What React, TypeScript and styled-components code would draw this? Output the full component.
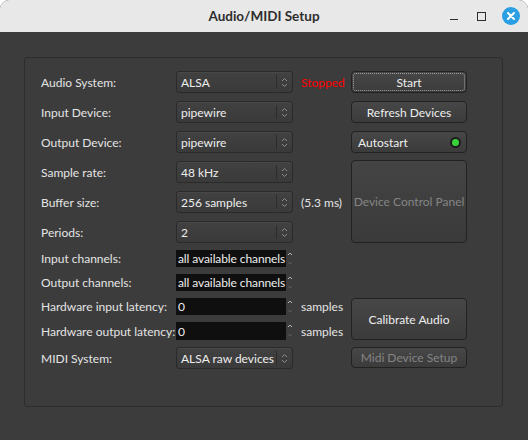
import React from 'react';
import styled, { createGlobalStyle } from 'styled-components';

const GlobalStyle = createGlobalStyle`
  html, body {
    margin: 0;
    padding: 0;
    background: #ffffff;
  }
  body {
    font-family: Lato, 'Noto Sans', sans-serif;
    font-size: 12px;
  }
`;

const ComboArrows = () => (
  <svg width="7" height="11" viewBox="0 0 7 11">
    <path d="M1 4 L3.5 1.5 L6 4" fill="none" stroke="#8c8c8c" strokeWidth="1" />
    <path d="M1 7 L3.5 9.5 L6 7" fill="none" stroke="#8c8c8c" strokeWidth="1" />
  </svg>
);

const SpinArrows = () => (
  <svg width="6" height="16" viewBox="0 0 6 16">
    <path d="M1 4 L3 2 L5 4" fill="none" stroke="#b8b8b8" strokeWidth="1" />
    <path d="M1 11 L3 13 L5 11" fill="none" stroke="#5a5a5a" strokeWidth="1" />
  </svg>
);

const Combo = ({ row, value }: { row: number; value: string }) => (
  <Field $row={row}>
    <ComboBox>
      <ComboText>{value}</ComboText>
      <ComboButton>
        <ComboArrows />
      </ComboButton>
    </ComboBox>
  </Field>
);

const Spin = ({ row, value }: { row: number; value: string }) => (
  <Field $row={row}>
    <SpinField>{value}</SpinField>
    <SpinButtons>
      <SpinArrows />
    </SpinButtons>
  </Field>
);

const settings = [
  { label: 'Audio System:', kind: 'combo', value: 'ALSA' },
  { label: 'Input Device:', kind: 'combo', value: 'pipewire' },
  { label: 'Output Device:', kind: 'combo', value: 'pipewire' },
  { label: 'Sample rate:', kind: 'combo', value: '48 kHz' },
  { label: 'Buffer size:', kind: 'combo', value: '256 samples' },
  { label: 'Periods:', kind: 'combo', value: '2' },
  { label: 'Input channels:', kind: 'spin', value: 'all available channels' },
  { label: 'Output channels:', kind: 'spin', value: 'all available channels' },
  { label: 'Hardware input latency:', kind: 'spin', value: '0' },
  { label: 'Hardware output latency:', kind: 'spin', value: '0' },
  { label: 'MIDI System:', kind: 'combo', value: 'ALSA raw devices' },
];

export default function App() {
  return (
    <>
      <GlobalStyle />
      <Window>
        <TitleBar>
          <Title>Audio/MIDI Setup</Title>
          <WindowControls>
            <Minimize />
            <Maximize />
            <CloseButton>
              <svg width="8" height="8" viewBox="0 0 8 8">
                <path d="M1 1 L7 7 M7 1 L1 7" stroke="#fff" strokeWidth="2" strokeLinecap="round" />
              </svg>
            </CloseButton>
          </WindowControls>
        </TitleBar>

        <Body>
          <Frame>
            <Grid>
              {settings.map((s, i) => (
                <React.Fragment key={s.label}>
                  <Label $row={i + 1}>{s.label}</Label>
                  {s.kind === 'combo' ? (
                    <Combo row={i + 1} value={s.value} />
                  ) : (
                    <Spin row={i + 1} value={s.value} />
                  )}
                </React.Fragment>
              ))}

              <Extra $row={1} $alert>Stopped</Extra>
              <Extra $row={5}>(5.3 ms)</Extra>
              <Extra $row={9}>samples</Extra>
              <Extra $row={10}>samples</Extra>

              <Button $row={1} $focused>Start</Button>
              <Button $row={2}>Refresh Devices</Button>
              <ToggleButton $row={3}>
                Autostart
                <Led />
              </ToggleButton>
              <PanelButton $row={4} $span={3} $disabled>Device Control Panel</PanelButton>
              <Button $row={9} $span={2}>Calibrate Audio</Button>
              <Button $row={11} $disabled>Midi Device Setup</Button>
            </Grid>
          </Frame>
        </Body>
      </Window>
    </>
  );
}

const Window = styled.div`
  width: 528px;
  height: 440px;
  display: flex;
  flex-direction: column;
  border-radius: 9px 9px 0 0;
  overflow: hidden;
  background: #3c3c3c;
`;

const TitleBar = styled.div`
  position: relative;
  height: 32px;
  flex: none;
  background: #e8e8e8;
  display: flex;
  align-items: center;
  justify-content: center;
`;

const Title = styled.div`
  font-family: Lato, 'Noto Sans', sans-serif;
  font-weight: 700;
  font-size: 13.5px;
  color: #2e2e2e;
`;

const WindowControls = styled.div`
  position: absolute;
  right: 8px;
  top: 7px;
  display: flex;
  align-items: center;
`;

const Minimize = styled.div`
  width: 8px;
  height: 1px;
  background: #2e2e2e;
  margin: 6px 19px 0 0;
`;

const Maximize = styled.div`
  width: 7px;
  height: 7px;
  border: 1px solid #2e2e2e;
  margin-right: 16px;
`;

const CloseButton = styled.div`
  width: 18px;
  height: 18px;
  border-radius: 50%;
  background: #2b9fe3;
  display: flex;
  align-items: center;
  justify-content: center;
`;

const Body = styled.div`
  flex: 1;
  padding: 25px 25px 33px 24px;
`;

const Frame = styled.div`
  height: 350px;
  box-sizing: border-box;
  border: 1px solid #2c2c2c;
  border-radius: 3px;
  padding: 13px 0 0 16px;
`;

const Grid = styled.div`
  display: grid;
  grid-template-columns: 135px 117px 8px 50px 116px;
  grid-template-rows: 23px 23px 23px 23px 23px 22px 17px 17px 17px 18px 22px;
  row-gap: 7px;
  color: #e6e6e6;
`;

type Cell = { $row: number; $span?: number };

const Label = styled.div<Cell>`
  grid-column: 1;
  grid-row: ${(p) => p.$row};
  display: flex;
  align-items: center;
  white-space: nowrap;
  color: #e4e4e4;
`;

const Field = styled.div<Cell>`
  grid-column: 2;
  grid-row: ${(p) => p.$row};
  display: flex;
  align-items: stretch;
  min-width: 0;
`;

const Extra = styled.div<Cell & { $alert?: boolean }>`
  grid-column: 4;
  grid-row: ${(p) => p.$row};
  display: flex;
  align-items: center;
  white-space: nowrap;
  color: ${(p) => (p.$alert ? '#ff0000' : '#e4e4e4')};
`;

const ComboBox = styled.div`
  flex: 1;
  height: 22px;
  box-sizing: border-box;
  display: flex;
  align-items: center;
  border: 1px solid #2a2a2a;
  border-radius: 3px;
  background: linear-gradient(#414141, #3a3a3a);
  box-shadow: inset 0 1px 0 rgba(255, 255, 255, 0.04);
`;

const ComboText = styled.div`
  flex: 1;
  padding-left: 4px;
  white-space: nowrap;
  color: #eeeeee;
`;

const ComboButton = styled.div`
  width: 15px;
  align-self: stretch;
  margin: 3px 0;
  border-left: 1px solid #2c2c2c;
  display: flex;
  align-items: center;
  justify-content: center;
`;

const SpinField = styled.div`
  width: 110px;
  flex: none;
  box-sizing: border-box;
  background: #0f0f0f;
  padding-left: 2px;
  display: flex;
  align-items: center;
  white-space: nowrap;
  overflow: hidden;
  color: #eeeeee;
  letter-spacing: -0.1px;
`;

const SpinButtons = styled.div`
  flex: 1;
  display: flex;
  align-items: center;
  justify-content: center;
`;

const Button = styled.div<Cell & { $focused?: boolean; $disabled?: boolean }>`
  grid-column: 5;
  grid-row: ${(p) => `${p.$row} / span ${p.$span ?? 1}`};
  position: relative;
  box-sizing: border-box;
  display: flex;
  align-items: center;
  justify-content: center;
  border: 1px solid #222222;
  border-radius: 4px;
  background: linear-gradient(#474747, #3b3b3b);
  color: ${(p) => (p.$disabled ? '#858585' : '#eeeeee')};
  white-space: nowrap;
  margin-bottom: ${(p) => (p.$span ? 0 : 1)}px;

  ${(p) =>
    p.$focused &&
    `
    &::after {
      content: '';
      position: absolute;
      inset: 1px;
      border: 1px dotted #a0a0a0;
      border-radius: 3px;
    }
  `}
`;

const ToggleButton = styled(Button)`
  justify-content: space-between;
  padding: 0 5px 0 6px;
`;

const Led = styled.div`
  width: 7px;
  height: 7px;
  border-radius: 50%;
  background: #38d33a;
  border: 2px solid #1c1c1c;
`;

const PanelButton = styled(Button)`
  margin-top: -1px;
  background: linear-gradient(#444444, #3a3a3a);
`;
